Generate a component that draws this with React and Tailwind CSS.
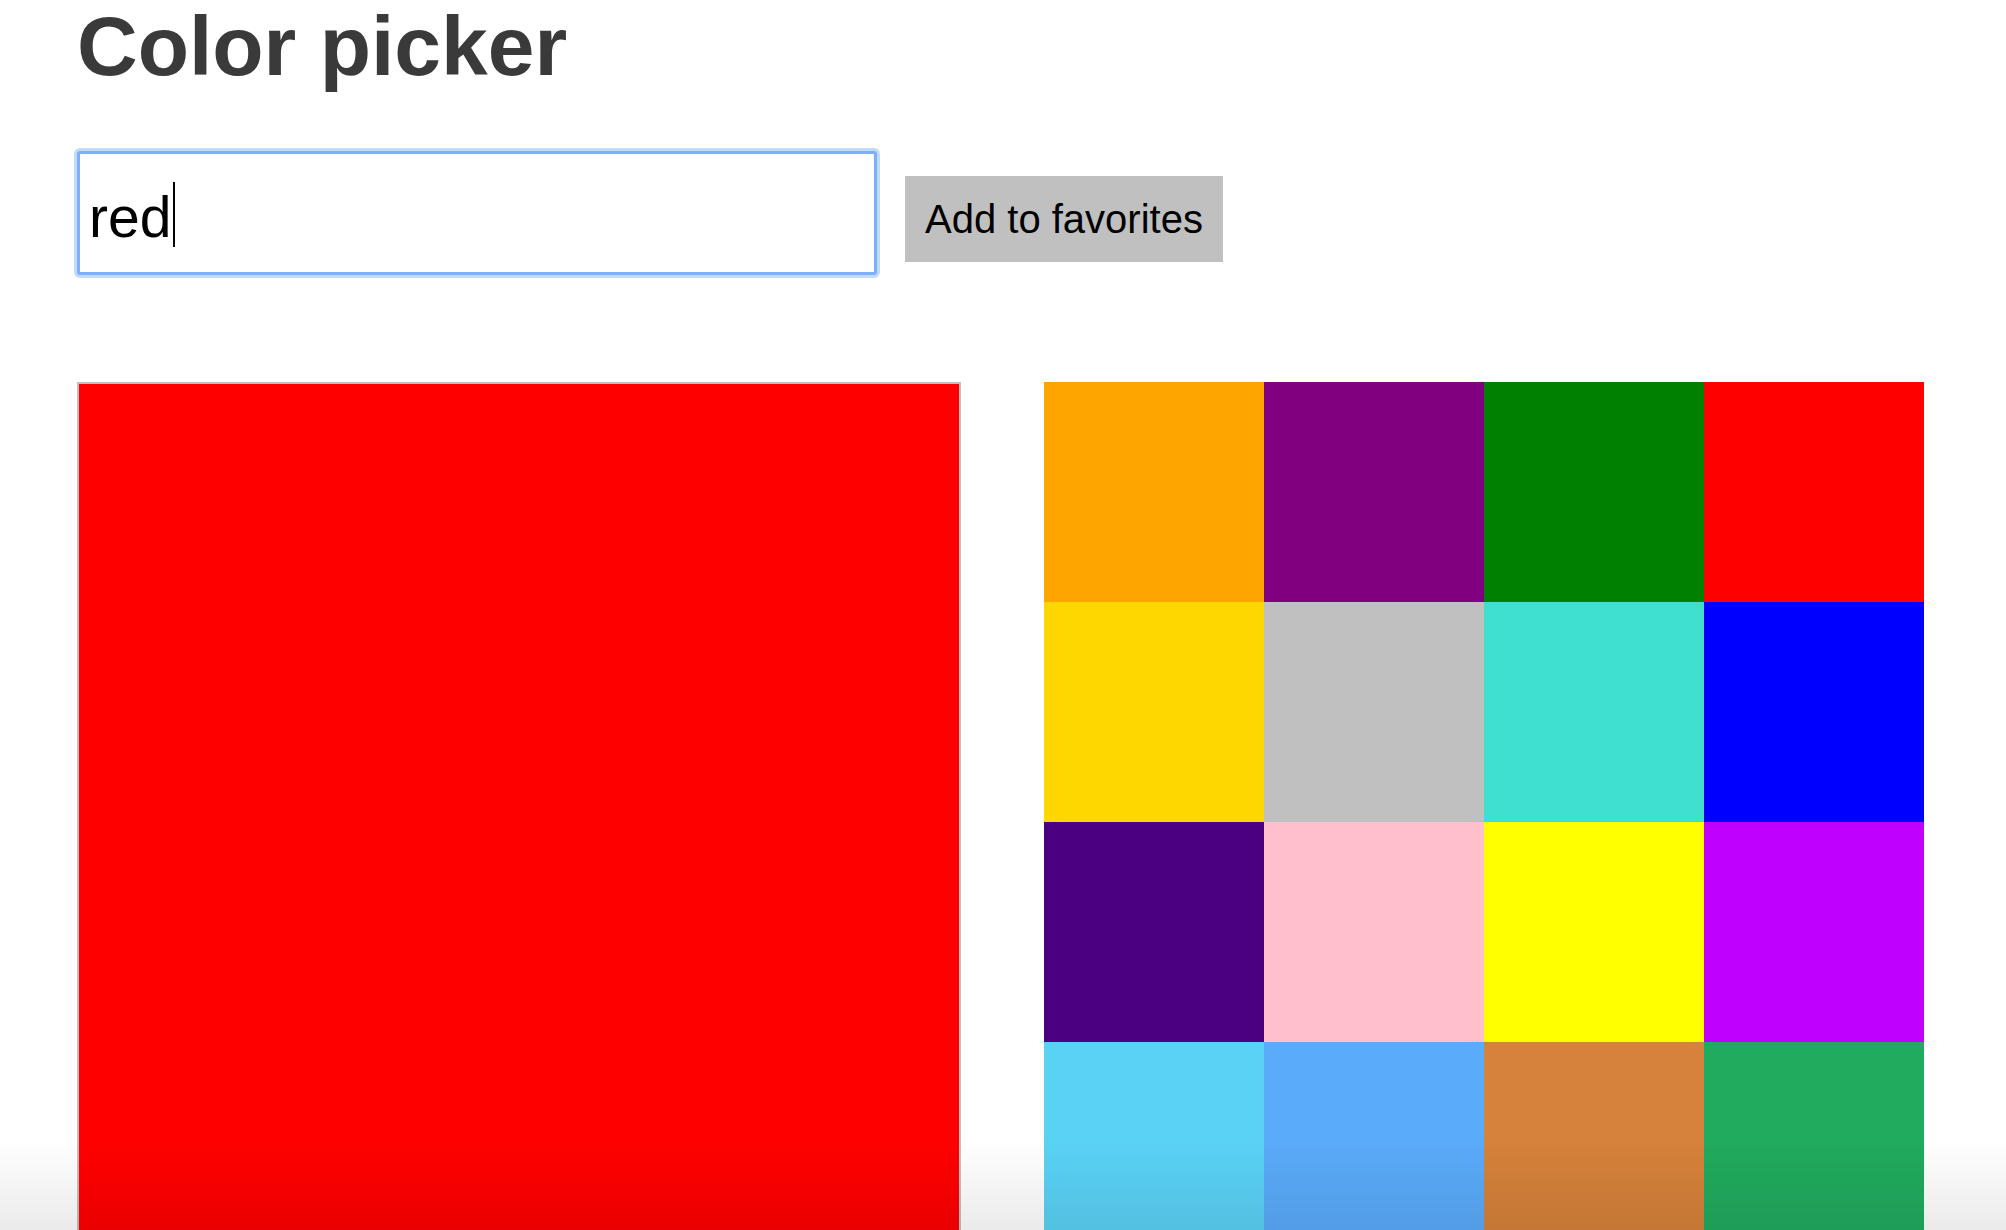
import { useState } from "react";

const FAVORITES = [
  "#ffa500", "#800080", "#008000", "#ff0000",
  "#ffd700", "#c0c0c0", "#40e0d0", "#0000ff",
  "#4b0082", "#ffc0cb", "#ffff00", "#bf00ff",
  "#5ad2f6", "#5aabf9", "#d6823a", "#21ab5e",
];

export default function App() {
  const [color, setColor] = useState("red");

  return (
    <div className="min-h-screen bg-white px-[77px] font-['Liberation_Sans',Arial,sans-serif]">
      <h1 className="pt-[4px] text-[84px] font-bold leading-none text-[#3a3a3a]">Color picker</h1>

      <div className="mt-[63px] flex items-start gap-[28px]">
        <div className="relative">
          <input
            autoFocus
            value={color}
            onChange={(e) => setColor(e.target.value)}
            className="h-[124px] w-[800px] rounded-[3px] border-[3px] border-[#7db0f7] bg-white px-[9px] pt-[8px] text-[57px] text-black caret-transparent shadow-[0_0_0_3px_#c3dbfb] outline-none"
          />
          {/* caret */}
          <span className="pointer-events-none absolute left-[96px] top-[31px] h-[65px] w-[2px] bg-black" />
        </div>
        <button className="mt-[25px] h-[86px] bg-[#c0c0c0] px-[20px] text-[40px] leading-none text-black">
          Add to favorites
        </button>
      </div>

      <div className="mt-[107px] flex items-start gap-[83px]">
        <div className="h-[884px] w-[884px] shrink-0 border-2 border-[#c0c0c0]" style={{ backgroundColor: color }} />
        <div className="grid w-[880px] shrink-0 grid-cols-4">
          {FAVORITES.map((c) => (
            <button key={c} className="h-[220px] w-[220px]" style={{ backgroundColor: c }} onClick={() => setColor(c)} />
          ))}
        </div>
      </div>

      <div className="pointer-events-none fixed inset-x-0 bottom-0 h-[90px] bg-gradient-to-b from-transparent to-black/[0.08]" />
    </div>
  );
}
